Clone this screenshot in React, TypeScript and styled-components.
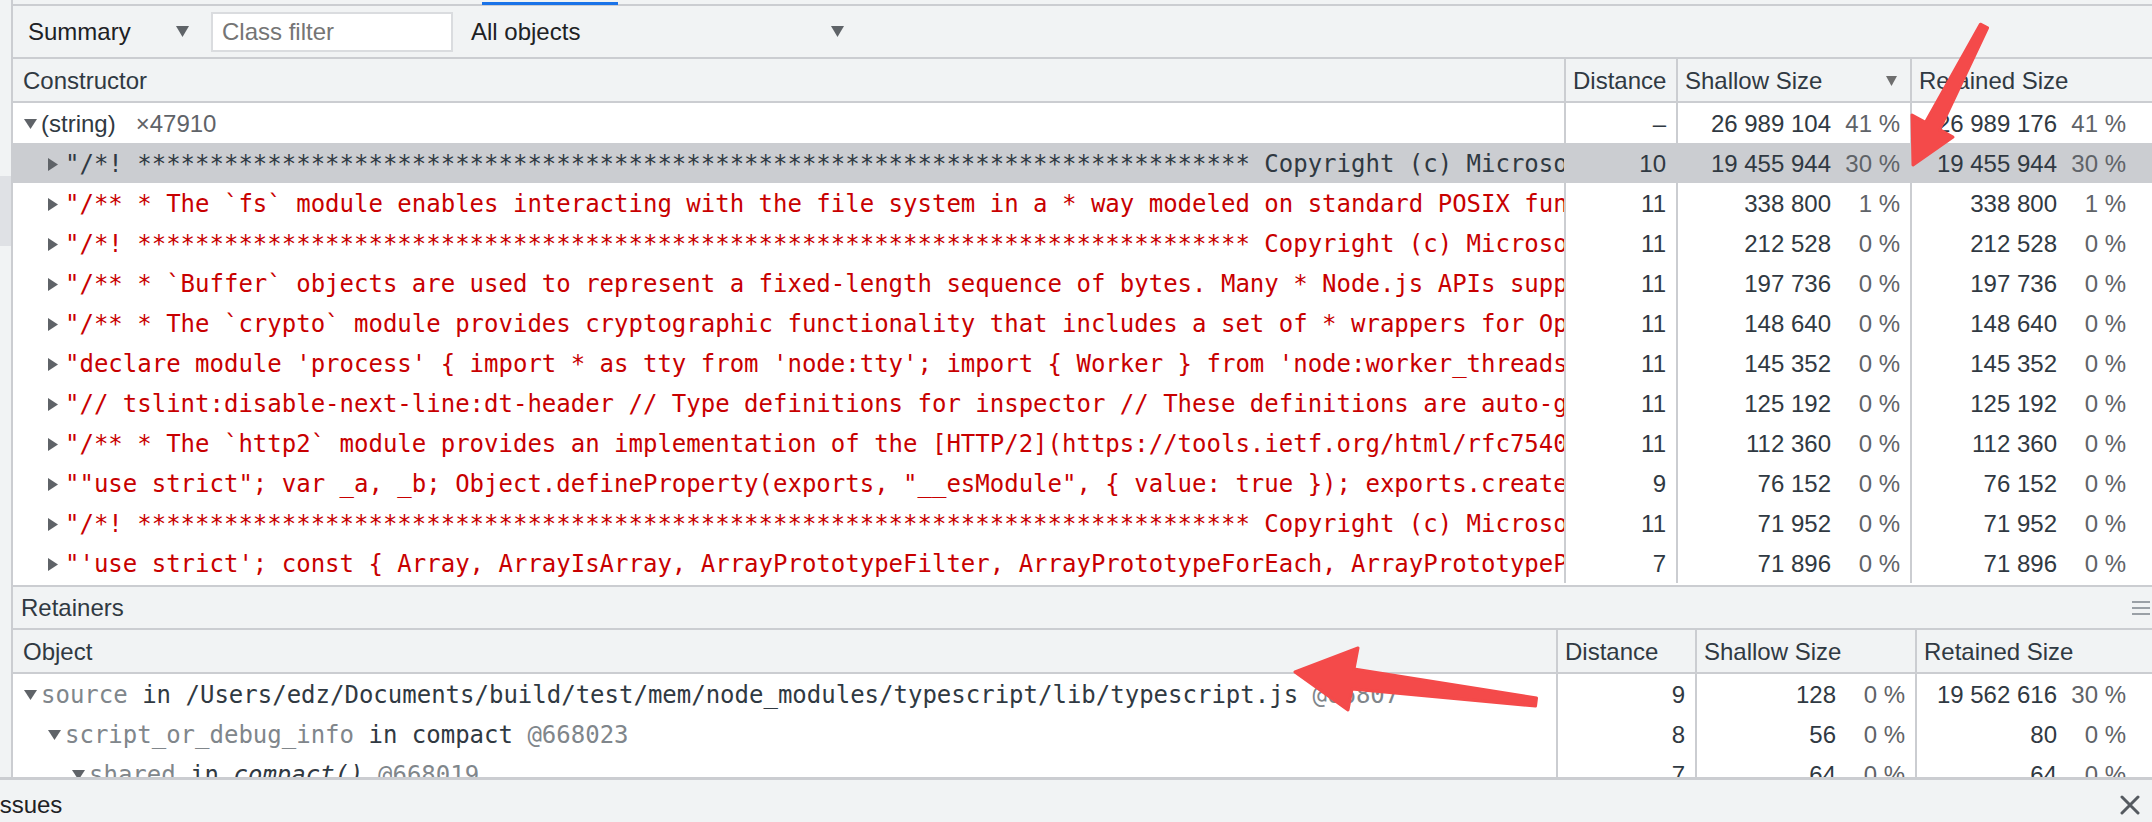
import React from "react";
import styled, { createGlobalStyle } from "styled-components";

const LINE = "#cbcdd1";
const PANEL = "#f1f3f4";
const TEXT = "#303942";
const SUBTLE = "#5f6368";

const GlobalStyle = createGlobalStyle`
  html, body {
    margin: 0;
    padding: 0;
    background: ${PANEL};
  }
  body {
    font-family: "Liberation Sans", Arial, sans-serif;
    font-size: 24px;
    color: ${TEXT};
  }
  * {
    box-sizing: border-box;
  }
`;

type Tone = "red" | "dark" | "gray";
const toneColor: Record<Tone, string> = {
  red: "#c80000",
  dark: "#303942",
  gray: "#80868b",
};

type Part = { t: string; tone: Tone; italic?: boolean };
type Size = [string, string];
type TopRow = {
  depth: number;
  open?: boolean;
  selected?: boolean;
  parts: Part[];
  distance: string;
  shallow: Size;
  retained: Size;
};

const STARS = "*".repeat(77);
const red = (t: string): Part[] => [{ t, tone: "red" }];

const topRows: TopRow[] = [
  {
    depth: 1,
    selected: true,
    parts: [{ t: `"/*! ${STARS} Copyright (c) Microsoft Corporation.`, tone: "dark" }],
    distance: "10",
    shallow: ["19 455 944", "30 %"],
    retained: ["19 455 944", "30 %"],
  },
  {
    depth: 1,
    parts: red('"/** * The `fs` module enables interacting with the file system in a * way modeled on standard POSIX functions.'),
    distance: "11",
    shallow: ["338 800", "1 %"],
    retained: ["338 800", "1 %"],
  },
  {
    depth: 1,
    parts: red(`"/*! ${STARS} Copyright (c) Microsoft Corporation.`),
    distance: "11",
    shallow: ["212 528", "0 %"],
    retained: ["212 528", "0 %"],
  },
  {
    depth: 1,
    parts: red('"/** * `Buffer` objects are used to represent a fixed-length sequence of bytes. Many * Node.js APIs support'),
    distance: "11",
    shallow: ["197 736", "0 %"],
    retained: ["197 736", "0 %"],
  },
  {
    depth: 1,
    parts: red('"/** * The `crypto` module provides cryptographic functionality that includes a set of * wrappers for OpenSSL'),
    distance: "11",
    shallow: ["148 640", "0 %"],
    retained: ["148 640", "0 %"],
  },
  {
    depth: 1,
    parts: red(`"declare module 'process' { import * as tty from 'node:tty'; import { Worker } from 'node:worker_threads';`),
    distance: "11",
    shallow: ["145 352", "0 %"],
    retained: ["145 352", "0 %"],
  },
  {
    depth: 1,
    parts: red('"// tslint:disable-next-line:dt-header // Type definitions for inspector // These definitions are auto-generated.'),
    distance: "11",
    shallow: ["125 192", "0 %"],
    retained: ["125 192", "0 %"],
  },
  {
    depth: 1,
    parts: red('"/** * The `http2` module provides an implementation of the [HTTP/2](https://tools.ietf.org/html/rfc7540)'),
    distance: "11",
    shallow: ["112 360", "0 %"],
    retained: ["112 360", "0 %"],
  },
  {
    depth: 1,
    parts: red('""use strict"; var _a, _b; Object.defineProperty(exports, "__esModule", { value: true }); exports.createSourceFile'),
    distance: "9",
    shallow: ["76 152", "0 %"],
    retained: ["76 152", "0 %"],
  },
  {
    depth: 1,
    parts: red(`"/*! ${STARS} Copyright (c) Microsoft Corporation.`),
    distance: "11",
    shallow: ["71 952", "0 %"],
    retained: ["71 952", "0 %"],
  },
  {
    depth: 1,
    parts: red(`"'use strict'; const { Array, ArrayIsArray, ArrayPrototypeFilter, ArrayPrototypeForEach, ArrayPrototypePush,`),
    distance: "7",
    shallow: ["71 896", "0 %"],
    retained: ["71 896", "0 %"],
  },
];

const retainerRows: TopRow[] = [
  {
    depth: 0,
    open: true,
    parts: [
      { t: "source", tone: "gray" },
      { t: " in ", tone: "dark" },
      { t: "/Users/edz/Documents/build/test/mem/node_modules/typescript/lib/typescript.js", tone: "dark" },
      { t: " @66807", tone: "gray" },
    ],
    distance: "9",
    shallow: ["128", "0 %"],
    retained: ["19 562 616", "30 %"],
  },
  {
    depth: 1,
    open: true,
    parts: [
      { t: "script_or_debug_info", tone: "gray" },
      { t: " in ", tone: "dark" },
      { t: "compact", tone: "dark" },
      { t: " @668023", tone: "gray" },
    ],
    distance: "8",
    shallow: ["56", "0 %"],
    retained: ["80", "0 %"],
  },
  {
    depth: 2,
    open: true,
    parts: [
      { t: "shared", tone: "gray" },
      { t: " in ", tone: "dark" },
      { t: "compact()", tone: "dark", italic: true },
      { t: " @668019", tone: "gray" },
    ],
    distance: "7",
    shallow: ["64", "0 %"],
    retained: ["64", "0 %"],
  },
];

const TOP_COLS = "1551px 112px 234px 1fr";
const RET_COLS = "1543px 139px 220px 1fr";

export default function App() {
  return (
    <Shell>
      <GlobalStyle />
      <Main>
        <LeftRail>
          <RailItem />
        </LeftRail>
        <Panel>
          <TabStrip>
            <ActiveTab />
          </TabStrip>
          <Toolbar>
            <Combo $width={161}>
              Summary
              <Caret />
            </Combo>
            <FilterInput placeholder="Class filter" readOnly />
            <Combo $width={373} $gap={18}>
              All objects
              <Caret />
            </Combo>
          </Toolbar>

          <TopGrid>
            <HeaderRow $cols={TOP_COLS}>
              <HeadCell>Constructor</HeadCell>
              <HeadCell>Distance</HeadCell>
              <HeadCell $sorted>
                Shallow Size
                <SortMark />
              </HeadCell>
              <HeadCell>Retained Size</HeadCell>
            </HeaderRow>
            <Body>
              <GridRow $cols={TOP_COLS}>
                <NameCell $depth={0}>
                  <Toggle>
                    <DownTri />
                  </Toggle>
                  <GroupName>(string)</GroupName>
                  <GroupCount>×47910</GroupCount>
                </NameCell>
                <ValueCell>–</ValueCell>
                <SizeCell num="26 989 104" pct="41 %" />
                <SizeCell num="26 989 176" pct="41 %" wide />
              </GridRow>
              {topRows.map((r, i) => (
                <DataRow key={i} row={r} cols={TOP_COLS} />
              ))}
            </Body>
          </TopGrid>

          <RetainersBar>
            Retainers
            <Grip>
              <span />
              <span />
              <span />
            </Grip>
          </RetainersBar>

          <RetainerGrid>
            <HeaderRow $cols={RET_COLS}>
              <HeadCell>Object</HeadCell>
              <HeadCell>Distance</HeadCell>
              <HeadCell>Shallow Size</HeadCell>
              <HeadCell>Retained Size</HeadCell>
            </HeaderRow>
            <Body>
              {retainerRows.map((r, i) => (
                <DataRow key={i} row={r} cols={RET_COLS} />
              ))}
            </Body>
          </RetainerGrid>
        </Panel>
      </Main>

      <Drawer>
        <DrawerTitle>Issues</DrawerTitle>
        <CloseIcon />
      </Drawer>

      <Annotations viewBox="0 0 2152 822">
        <polygon points="1980.4,24.2 1925.4,122.4 1912,115 1913,165 1953,137 1939.6,129.6 1987.6,27.8" />
        <polygon points="1536.5,698 1354,669 1358,648 1295,672 1348,710 1352,689 1535.5,706" />
      </Annotations>
    </Shell>
  );
}

function DataRow({ row, cols }: { row: TopRow; cols: string }) {
  return (
    <GridRow $cols={cols} $selected={row.selected}>
      <NameCell $depth={row.depth}>
        <Toggle>{row.open ? <DownTri /> : <RightTri />}</Toggle>
        {row.parts.map((p, i) => (
          <Code key={i} $tone={p.tone} $italic={p.italic}>
            {p.t}
          </Code>
        ))}
      </NameCell>
      <ValueCell>{row.distance}</ValueCell>
      <SizeCell num={row.shallow[0]} pct={row.shallow[1]} />
      <SizeCell num={row.retained[0]} pct={row.retained[1]} wide />
    </GridRow>
  );
}

function SizeCell({ num, pct, wide }: { num: string; pct: string; wide?: boolean }) {
  return (
    <ValueCell $padRight={wide ? 26 : 10}>
      <span>{num}</span>
      <Percent>{pct.replace(" ", "\u00a0")}</Percent>
    </ValueCell>
  );
}

function Caret() {
  return (
    <svg width="13" height="11" viewBox="0 0 13 11">
      <path d="M0 0 L13 0 L6.5 11 Z" fill="#5f6368" />
    </svg>
  );
}

function SortMark() {
  return (
    <svg width="11" height="10" viewBox="0 0 11 10">
      <path d="M0 0 L11 0 L5.5 10 Z" fill="#6e6e6e" />
    </svg>
  );
}

function RightTri() {
  return (
    <svg width="10" height="13" viewBox="0 0 10 13">
      <path d="M0 0 L10 6.5 L0 13 Z" fill="#5f6368" />
    </svg>
  );
}

function DownTri() {
  return (
    <svg width="13" height="10" viewBox="0 0 13 10">
      <path d="M0 0 L13 0 L6.5 10 Z" fill="#5f6368" />
    </svg>
  );
}

function CloseIcon() {
  return (
    <CloseSvg width="20" height="20" viewBox="0 0 20 20">
      <path d="M2 2 L18 18 M18 2 L2 18" stroke="#555a60" strokeWidth="3" strokeLinecap="round" />
    </CloseSvg>
  );
}

const Shell = styled.div`
  position: relative;
  width: 2152px;
  height: 822px;
  display: flex;
  flex-direction: column;
  background: ${PANEL};
  overflow: hidden;
`;

const Main = styled.div`
  display: flex;
  height: 777px;
`;

const LeftRail = styled.div`
  width: 11px;
  flex: none;
  padding-top: 176px;
`;

const RailItem = styled.div`
  height: 70px;
  background: #dfe1e5;
`;

const Panel = styled.div`
  flex: 1;
  min-width: 0;
  display: flex;
  flex-direction: column;
  border-left: 2px solid ${LINE};
`;

const TabStrip = styled.div`
  height: 6px;
  display: flex;
  align-items: flex-end;
  padding-left: 469px;
  border-bottom: 2px solid ${LINE};
`;

const ActiveTab = styled.div`
  width: 136px;
  height: 3px;
  margin-bottom: -1px;
  background: #1a73e8;
`;

const Toolbar = styled.div`
  height: 53px;
  display: flex;
  align-items: center;
  padding-left: 15px;
  border-bottom: 2px solid ${LINE};
  background: ${PANEL};
`;

const Combo = styled.div<{ $width: number; $gap?: number }>`
  width: ${(p) => p.$width}px;
  margin-left: ${(p) => p.$gap ?? 0}px;
  display: flex;
  align-items: center;
  justify-content: space-between;
  font-size: 24px;
  color: #202124;
  white-space: nowrap;
`;

const FilterInput = styled.input`
  width: 242px;
  height: 40px;
  margin-left: 22px;
  padding: 0 9px;
  border: 2px solid #dadcdf;
  border-radius: 0;
  outline: none;
  background: #fff;
  font-family: "Liberation Sans", Arial, sans-serif;
  font-size: 24px;
  color: ${TEXT};

  &::placeholder {
    color: #757575;
  }
`;

const TopGrid = styled.div`
  height: 526px;
  display: flex;
  flex-direction: column;
  background: #fff;
`;

const RetainerGrid = styled.div`
  flex: 1;
  min-height: 0;
  display: flex;
  flex-direction: column;
  background: #fff;
`;

const HeaderRow = styled.div<{ $cols: string }>`
  display: grid;
  grid-template-columns: ${(p) => p.$cols};
  height: 44px;
  flex: none;
  background: ${PANEL};
  border-bottom: 2px solid ${LINE};
`;

const HeadCell = styled.div<{ $sorted?: boolean }>`
  display: flex;
  align-items: center;
  justify-content: ${(p) => (p.$sorted ? "space-between" : "flex-start")};
  padding: 1px ${(p) => (p.$sorted ? 13 : 7)}px 0 7px;
  border-left: 2px solid ${LINE};
  font-size: 24px;
  color: ${TEXT};
  white-space: nowrap;
  overflow: hidden;

  &:first-child {
    border-left: none;
    padding-left: 10px;
  }
`;

const Body = styled.div`
  flex: 1;
  min-height: 0;
  overflow: hidden;
`;

const GridRow = styled.div<{ $cols: string; $selected?: boolean }>`
  display: grid;
  grid-template-columns: ${(p) => p.$cols};
  height: 40px;
  background: ${(p) => (p.$selected ? "#cbcdd1" : "transparent")};

  & > * {
    padding-top: 2px;
  }
`;

const NameCell = styled.div<{ $depth: number }>`
  display: flex;
  align-items: center;
  padding-left: ${(p) => 11 + p.$depth * 24}px;
  overflow: hidden;
  white-space: pre;
`;

const Toggle = styled.span`
  width: 17px;
  flex: none;
  display: flex;
  align-items: center;
`;

const GroupName = styled.span`
  font-size: 24px;
  color: ${TEXT};
`;

const GroupCount = styled.span`
  margin-left: 20px;
  font-size: 24px;
  color: ${SUBTLE};
`;

const Code = styled.span<{ $tone: Tone; $italic?: boolean }>`
  font-family: "DejaVu Sans Mono", "Liberation Mono", monospace;
  font-size: 24px;
  font-style: ${(p) => (p.$italic ? "italic" : "normal")};
  color: ${(p) => toneColor[p.$tone]};
  white-space: pre;
  flex: none;
`;

const ValueCell = styled.div<{ $padRight?: number }>`
  display: flex;
  align-items: center;
  justify-content: flex-end;
  padding-right: ${(p) => p.$padRight ?? 10}px;
  border-left: 2px solid ${LINE};
  font-size: 24px;
  color: ${TEXT};
  white-space: nowrap;
  overflow: hidden;
`;

const Percent = styled.span`
  width: 60px;
  margin-left: 9px;
  text-align: right;
  color: ${SUBTLE};
`;

const RetainersBar = styled.div`
  height: 45px;
  flex: none;
  display: flex;
  align-items: center;
  justify-content: space-between;
  padding: 0 2px 0 8px;
  border-top: 2px solid ${LINE};
  border-bottom: 2px solid ${LINE};
  font-size: 24px;
  color: ${TEXT};
`;

const Grip = styled.div`
  width: 18px;
  display: flex;
  flex-direction: column;
  gap: 4px;

  span {
    height: 2px;
    background: #9aa0a6;
  }
`;

const Drawer = styled.div`
  height: 45px;
  flex: none;
  display: flex;
  align-items: center;
  justify-content: space-between;
  padding: 8px 12px 0 0;
  border-top: 3px solid ${LINE};
  background: ${PANEL};
`;

const DrawerTitle = styled.span`
  margin-left: -7px;
  font-size: 24px;
  color: #202124;
`;

const CloseSvg = styled.svg`
  flex: none;
`;

const Annotations = styled.svg`
  position: absolute;
  left: 0;
  top: 0;
  width: 2152px;
  height: 822px;
  pointer-events: none;

  polygon {
    fill: #f44a4a;
    stroke: #f44a4a;
    stroke-width: 3;
    stroke-linejoin: round;
  }
`;
